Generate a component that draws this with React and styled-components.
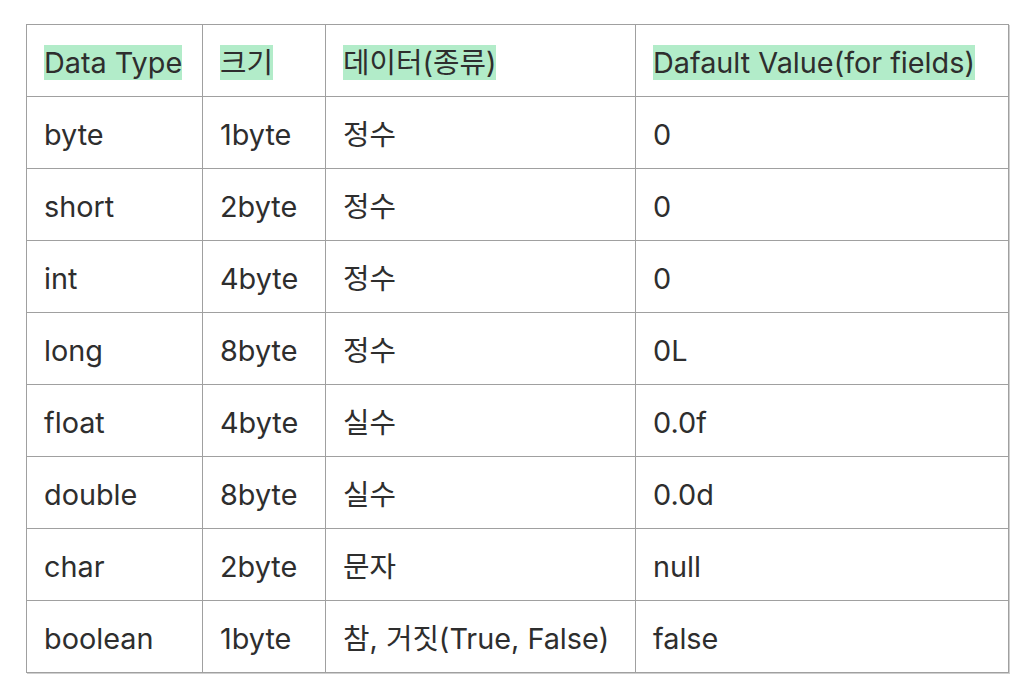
import React from "react";
import styled, { createGlobalStyle } from "styled-components";

const GlobalStyle = createGlobalStyle`
  body {
    margin: 0;
    background: #ffffff;
    font-family: Inter, "Noto Sans", "Noto Sans CJK KR", sans-serif;
    color: #2e2e2e;
  }
`;

const Page = styled.div`
  padding: 24px 26px;
`;

const Table = styled.table`
  width: 982px;
  border-collapse: collapse;
  table-layout: fixed;
  border: 1px solid #9a9a9a;
  box-shadow: 1px 1px 0 #cfcfcf;
`;

const Cell = styled.td`
  height: 66px;
  padding: 5px 17px 0;
  border: 1px solid #a0a0a0;
  font-size: 28.8px;
  line-height: 1.2;
  vertical-align: middle;
  white-space: nowrap;
  font-family: Inter, "Noto Sans CJK KR", sans-serif;
`;

const HeadCell = styled(Cell).attrs({ as: "th" })`
  font-weight: 400;
  text-align: left;
`;

const Mark = styled.span`
  background: #b2ecc9;
`;

const columns = [
  { title: "Data Type", width: 176 },
  { title: "크기", width: 123 },
  { title: "데이터(종류)", width: 310 },
  { title: "Dafault Value(for fields)", width: 373 },
];

const rows = [
  ["byte", "1byte", "정수", "0"],
  ["short", "2byte", "정수", "0"],
  ["int", "4byte", "정수", "0"],
  ["long", "8byte", "정수", "0L"],
  ["float", "4byte", "실수", "0.0f"],
  ["double", "8byte", "실수", "0.0d"],
  ["char", "2byte", "문자", "null"],
  ["boolean", "1byte", "참, 거짓(True, False)", "false"],
];

export default function App() {
  return (
    <Page>
      <GlobalStyle />
      <Table>
        <colgroup>
          {columns.map((c) => (
            <col key={c.title} style={{ width: c.width }} />
          ))}
        </colgroup>
        <thead>
          <tr>
            {columns.map((c) => (
              <HeadCell key={c.title}>
                <Mark>{c.title}</Mark>
              </HeadCell>
            ))}
          </tr>
        </thead>
        <tbody>
          {rows.map((r) => (
            <tr key={r[0]}>
              {r.map((v, i) => (
                <Cell key={i}>{v}</Cell>
              ))}
            </tr>
          ))}
        </tbody>
      </Table>
    </Page>
  );
}
